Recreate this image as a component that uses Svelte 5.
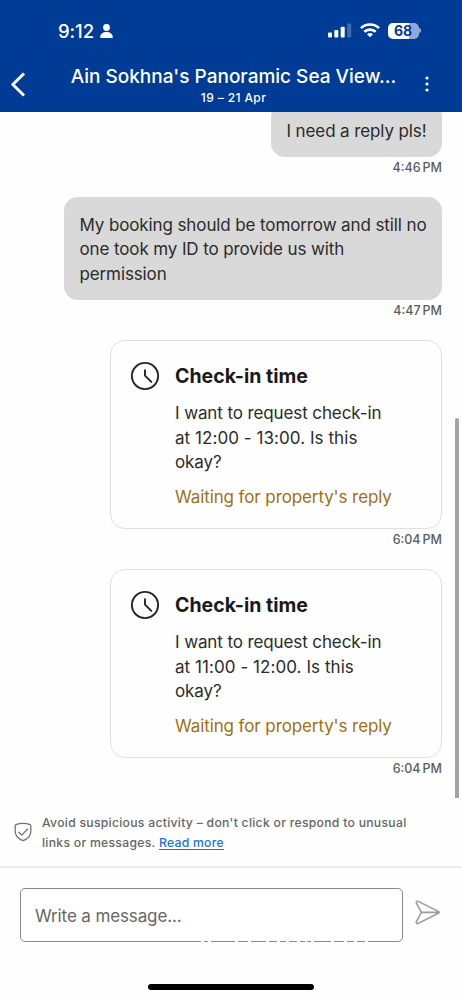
<script lang="ts">
	interface Message {
		kind: 'text' | 'request';
		lines: string[];
		time: string;
	}

	const messages: Message[] = [
		{ kind: 'text', lines: ['I need a reply pls!'], time: '4:46' },
		{
			kind: 'text',
			lines: [
				'My booking should be tomorrow and still no',
				'one took my ID to provide us with',
				'permission'
			],
			time: '4:47'
		},
		{
			kind: 'request',
			lines: ['I want to request check-in', 'at 12:00 - 13:00. Is this', 'okay?'],
			time: '6:04'
		},
		{
			kind: 'request',
			lines: ['I want to request check-in', 'at 11:00 - 12:00. Is this', 'okay?'],
			time: '6:04'
		}
	];

	let draft = $state('');
</script>

<div class="screen">
	<header>
		<div class="status-bar">
			<div class="clock">
				<span>9:12</span>
				<svg width="13" height="14" viewBox="0 0 13 14" fill="#fff">
					<circle cx="6.5" cy="3.5" r="3.4" />
					<path d="M0.2 13.2C0.2 10 3 8 6.5 8s6.3 2 6.3 5.2q0 .8-.8.8H1q-.8 0-.8-.8Z" />
				</svg>
			</div>
			<div class="indicators">
				<svg width="24" height="15" viewBox="0 0 24 15" fill="#fff">
					<rect x="0" y="9.5" width="4" height="5" rx="1" />
					<rect x="6.3" y="7" width="4" height="7.5" rx="1" />
					<rect x="12.7" y="3.7" width="4" height="10.8" rx="1" />
					<rect x="19.2" y="0.5" width="4" height="14" rx="1" opacity="0.25" />
				</svg>
				<svg width="20" height="15" viewBox="0 0 20 15" fill="none" stroke="#fff" stroke-width="2.7">
					<path d="M1 5.1C6 .3 14 .3 19 5.1" />
					<path d="M4.3 8.8c3.2-3 8.2-3 11.4 0" />
					<path d="M7 11.2c1.7-1.5 4.3-1.5 6 0l-3 3Z" fill="#fff" stroke="none" />
				</svg>
				<div class="battery"><span>68</span></div>
			</div>
		</div>
		<div class="title-bar">
			<svg width="16" height="25" viewBox="0 0 16 25" fill="none" stroke="#fff" stroke-width="3">
				<path d="M14 1.5 2.8 12.5 14 23.5" stroke-linejoin="round" />
			</svg>
			<div class="titles">
				<h1>Ain Sokhna's Panoramic Sea View...</h1>
				<p>19 – 21 Apr</p>
			</div>
			<svg width="4" height="16" viewBox="0 0 4 16" fill="#fff">
				<circle cx="2" cy="2" r="1.6" />
				<circle cx="2" cy="8" r="1.6" />
				<circle cx="2" cy="14" r="1.6" />
			</svg>
		</div>
	</header>

	<main>
		{#each messages as message}
			{#if message.kind === 'text'}
				<div class="bubble">
					{#each message.lines as line}<div>{line}</div>{/each}
				</div>
			{:else}
				<div class="card">
					<svg width="30" height="30" viewBox="0 0 30 30" fill="none" stroke="#242424" stroke-width="1.9">
						<circle cx="15" cy="15" r="13.1" />
						<path d="M15 9.3V14.6L21.3 20.9" stroke-linejoin="round" stroke-linecap="round" />
					</svg>
					<div class="card-body">
						<h2>Check-in time</h2>
						{#each message.lines as line}
							<div class:slot={line.includes(':')}>{line}</div>
						{/each}
						<p class="waiting">Waiting for property's reply</p>
					</div>
				</div>
			{/if}
			<time>{message.time}<span>PM</span></time>
		{/each}
		<div class="scrollbar"></div>
	</main>

	<aside>
		<svg width="18" height="20" viewBox="0 0 18 20" fill="none" stroke="#737373" stroke-width="1.3">
			<path
				d="M9 1.3C6.4 1.3 3.8 1.8 2 2.7Q1.2 3.1 1.2 4V9.2C1.2 13.6 4.1 16.8 9 18.6c4.9-1.8 7.8-5 7.8-9.4V4q0-.9-.8-1.3C14.2 1.8 11.6 1.3 9 1.3Z"
			/>
			<path d="M4.8 10.2 7.7 13.1 13.7 7" stroke-linecap="round" stroke-linejoin="round" />
		</svg>
		<div>
			<div>Avoid suspicious activity – don't click or respond to unusual</div>
			<div>links or messages. <a href="#more">Read more</a></div>
		</div>
	</aside>

	<footer>
		<div class="composer">
			<div class="field">
				<input bind:value={draft} placeholder="Write a message..." aria-label="Message" />
				<svg class="gaps" width="200" height="3" viewBox="0 0 200 3">
					<path
						d="M0 1.5H182"
						stroke="#fff"
						stroke-width="3"
						stroke-dasharray="3 4 3 24 3 10 3 15 3 8 3 6 3 8 3 5 2 4 3 17 3 10 3 7 3 8 3 30"
					/>
				</svg>
			</div>
			<svg width="26" height="25" viewBox="0 0 26 25" fill="none" stroke="#9b9b9b" stroke-width="1.6" stroke-linejoin="round">
				<path
					d="M3.2 1.4 23.4 11.4Q25 12.4 23.4 13.2L3.2 23.4C1.8 24 .9 23 1.4 21.7L6.4 12.4 1.4 3.1C.8 1.8 1.9.8 3.2 1.4ZM6.4 12.4H24"
				/>
			</svg>
		</div>
		<div class="home-indicator"></div>
	</footer>
</div>

<style>
	:global(body) {
		margin: 0;
		background: #fefefe;
	}

	.screen {
		display: flex;
		flex-direction: column;
		width: 462px;
		height: 1000px;
		overflow: hidden;
		background: #fefefe;
		color: #2b2b2b;
		font-family: Inter, 'Liberation Sans', sans-serif;
		white-space: nowrap;
	}

	h1,
	h2,
	p {
		margin: 0;
	}

	svg {
		display: block;
		flex: none;
	}

	header {
		flex: none;
		box-sizing: border-box;
		height: 112px;
		padding-top: 18px;
		background: #003b95;
		color: #fff;
	}

	.status-bar {
		display: flex;
		justify-content: space-between;
		align-items: center;
		height: 25px;
		padding: 0 41px 0 58px;
	}

	.clock {
		display: flex;
		align-items: center;
		gap: 6px;
		font-size: 18.5px;
		font-weight: 500;
		letter-spacing: -0.1px;
	}

	.indicators {
		display: flex;
		align-items: center;
		gap: 8px;
	}

	.battery {
		position: relative;
		box-sizing: border-box;
		width: 31px;
		height: 16px;
		margin-right: 2.5px;
		border-radius: 5px;
		background: linear-gradient(90deg, #fff 68%, #8fa8d8 68%);
		color: #003b95;
		font-size: 14px;
		font-weight: 700;
		line-height: 16px;
		text-align: center;
	}

	.battery::after {
		content: '';
		position: absolute;
		top: 5.5px;
		right: -2.5px;
		width: 1.6px;
		height: 5px;
		border-radius: 0 2px 2px 0;
		background: #8fa8d8;
	}

	.title-bar {
		display: flex;
		align-items: center;
		height: 60px;
		margin-top: 11px;
		padding: 0 33px 0 10px;
	}

	.titles {
		flex: 1;
		margin-top: 2px;
		padding-left: 16px;
		text-align: center;
	}

	h1 {
		font-size: 19px;
		font-weight: 500;
		line-height: 24px;
	}

	.titles p {
		margin-top: 1px;
		font-size: 12px;
		font-weight: 500;
		line-height: 15px;
		letter-spacing: 0.4px;
	}

	main {
		position: relative;
		display: flex;
		flex: none;
		flex-direction: column;
		align-items: flex-end;
		box-sizing: border-box;
		height: 686px;
		padding-right: 20px;
		overflow: hidden;
		font-size: 17px;
		line-height: 24.5px;
		letter-spacing: -0.11px;
	}

	.bubble {
		flex: none;
		padding: 15.5px 15.5px 14px 15px;
		border-radius: 14px;
		background: #d9d9d9;
	}

	.bubble:first-child {
		margin-top: -9px;
	}

	time {
		display: flex;
		flex: none;
		gap: 2px;
		height: 40px;
		color: #5c5c5c;
		font-size: 12.5px;
		font-weight: 500;
		line-height: 21px;
		letter-spacing: 0;
	}

	.card {
		display: flex;
		flex: none;
		gap: 15px;
		box-sizing: border-box;
		width: 332px;
		height: 189px;
		padding: 20px 19px;
		border: 1.5px solid #e0e0e0;
		border-radius: 15px;
	}

	h2 {
		margin: 3px 0 12px;
		color: #1a1a1a;
		font-size: 19.5px;
		font-weight: 700;
		line-height: 25px;
		letter-spacing: 0;
	}

	.slot {
		letter-spacing: 0.06px;
	}

	.waiting {
		margin-top: 10px;
		color: #9c7112;
	}

	.scrollbar {
		position: absolute;
		top: 306px;
		right: 3px;
		width: 4px;
		height: 380px;
		border-radius: 2px 2px 0 0;
		background: #a3a3a3;
	}

	aside {
		display: flex;
		flex: none;
		gap: 10px;
		box-sizing: border-box;
		height: 70px;
		padding: 15px 0 0 14px;
		border-bottom: 2px solid #ebebeb;
		color: #666;
		font-size: 12.2px;
		font-weight: 500;
		line-height: 20px;
		letter-spacing: 0.28px;
	}

	aside svg {
		margin-top: 9px;
	}

	aside a {
		color: #1a73d9;
		text-underline-offset: 2px;
	}

	.composer {
		display: flex;
		align-items: center;
		gap: 12px;
		padding: 20px 0 0 20px;
	}

	.composer > svg {
		margin-top: -6px;
	}

	.field {
		position: relative;
	}

	input {
		display: block;
		box-sizing: border-box;
		width: 383px;
		height: 54px;
		padding: 1px 14px 0;
		border: 1.5px solid #888;
		border-radius: 5px;
		outline: none;
		background: #fff;
		font: 17px Inter, 'Liberation Sans', sans-serif;
		letter-spacing: -0.12px;
	}

	input::placeholder {
		color: #666;
		opacity: 1;
	}

	.gaps {
		position: absolute;
		bottom: -1px;
		left: 181px;
	}

	.home-indicator {
		width: 166px;
		height: 6px;
		margin: 42px auto 0;
		border-radius: 3px;
		background: #000;
	}
</style>
